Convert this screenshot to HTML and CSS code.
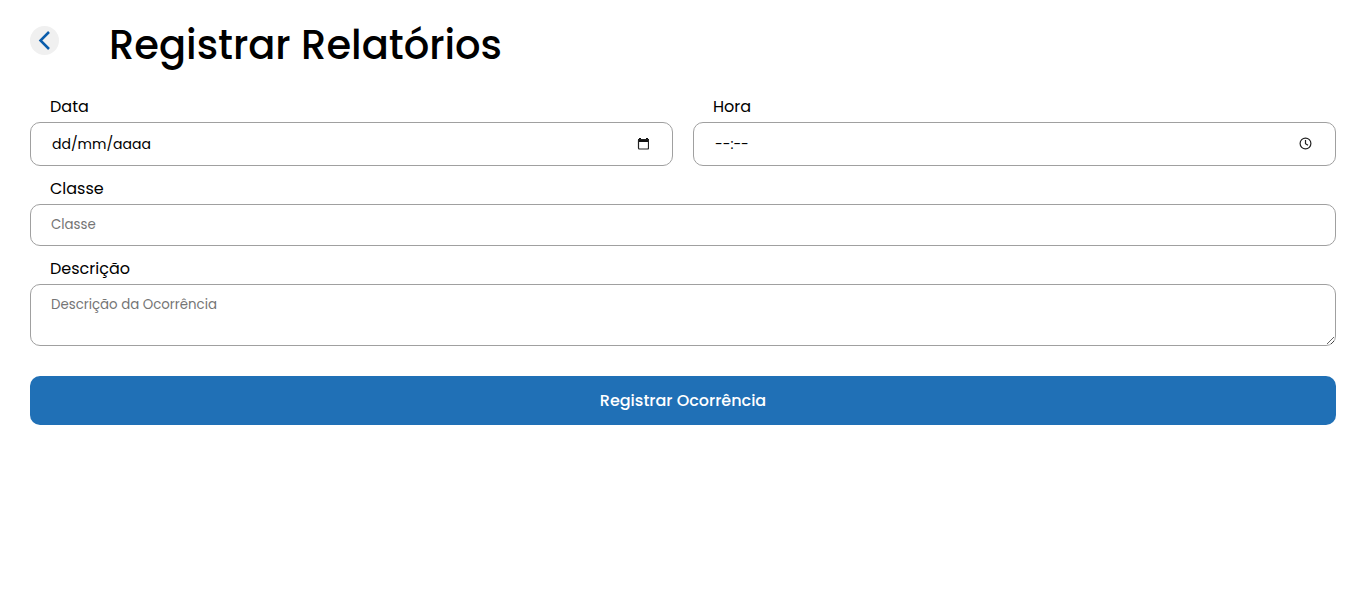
FILE: index.html
```
<!DOCTYPE html>
<html lang="pt-BR">
<head>
  <meta charset="utf-8">
  <meta name="viewport" content="width=device-width, initial-scale=1">
  <title>Registrar Relatórios</title>
  <link rel="stylesheet" href="styles.css">
</head>
<body>
  <main class="page">
    <header class="header">
      <a class="back" href="#" aria-label="Voltar">
        <svg class="back-icon" viewBox="0 0 29 29" aria-hidden="true"><path d="M19 6 10.500 14.500 19 23"/></svg>
      </a>
      <h1 class="title">Registrar Relatórios</h1>
    </header>
    <form class="form">
      <div class="row">
        <div class="field">
          <label class="label" for="data">Data</label>
          <div class="control picker">
            <input class="picker-input" id="data" type="text" placeholder="dd/mm/aaaa">
            <button class="picker-button" type="button" aria-label="Abrir calendário">
              <svg class="picker-icon" viewBox="0 0 13 13" aria-hidden="true"><path class="solid" d="M2 2h11v3H2zM3 1h2v2H3zM10 1h2v2h-2z"/><rect class="line" x="2.500" y="2.500" width="10" height="9.500" rx="1"/></svg>
            </button>
          </div>
        </div>
        <div class="field">
          <label class="label" for="hora">Hora</label>
          <div class="control picker">
            <input class="picker-input" id="hora" type="text" placeholder="--:--">
            <button class="picker-button" type="button" aria-label="Escolher horário">
              <svg class="picker-icon" viewBox="0 0 13 13" aria-hidden="true"><circle class="line" cx="6.500" cy="6.500" r="5.400"/><path class="line" d="M6.500 3v3.700L9 8.200"/></svg>
            </button>
          </div>
        </div>
      </div>
      <div class="field">
        <label class="label" for="classe">Classe</label>
        <input class="control text" id="classe" type="text" placeholder="Classe">
      </div>
      <div class="field">
        <label class="label" for="descricao">Descrição</label>
        <textarea class="control text area" id="descricao" placeholder="Descrição da Ocorrência"></textarea>
      </div>
      <button class="submit" type="submit">Registrar Ocorrência</button>
    </form>
  </main>
</body>
</html>
```
FILE: styles.css
```
* {
  box-sizing: border-box;
}

body {
  margin: 0;
  background: #fff;
  color: #000;
  font-family: Poppins, Inter, sans-serif;
  font-size: 16px;
  line-height: 24px;
}

.page {
  padding: 15px 30px 30px;
}

.header {
  display: flex;
  align-items: flex-start;
  gap: 50px;
  margin-bottom: 20px;
}

.back {
  flex: none;
  width: 29px;
  height: 29px;
  margin-top: 11px;
  border-radius: 50%;
  background: #f0f0f0;
}

.back-icon {
  display: block;
  fill: none;
  stroke: #0a5cab;
  stroke-width: 2.5;
}

.title {
  margin: 0;
  font-size: 40px;
  font-weight: 500;
  line-height: 60px;
}

.form {
  display: flex;
  flex-direction: column;
  gap: 11px;
}

.row {
  display: grid;
  grid-template-columns: 1fr 1fr;
  gap: 20px;
}

.field {
  display: flex;
  flex-direction: column;
  gap: 3px;
}

.label {
  padding-left: 20px;
}

.control {
  width: 100%;
  border: 1px solid #a0a0a0;
  border-radius: 10px;
  background: #fff;
  font-family: inherit;
  line-height: 20px;
}

.picker {
  display: flex;
  align-items: center;
  height: 44px;
  padding: 0 20px 1px 21px;
}

.picker-input {
  flex: 1;
  min-width: 0;
  padding: 0;
  border: 0;
  outline: 0;
  background: transparent;
  color: #000;
  font: inherit;
  font-size: 14px;
}

.picker-input::placeholder {
  color: #000;
  opacity: 1;
}

.picker-button {
  display: flex;
  padding: 3px;
  border: 0;
  background: transparent;
}

.picker-icon {
  width: 13px;
  height: 13px;
}

.solid {
  fill: #111;
}

.line {
  fill: none;
  stroke: #222;
  stroke-width: 1.2;
}

.text {
  height: 42px;
  padding: 10px 20px;
}

.text::placeholder {
  color: #757575;
}

.area {
  display: block;
  height: 62px;
  resize: vertical;
}

.submit {
  margin-top: 19px;
  padding: 13px 20px 12px;
  border: 0;
  border-radius: 10px;
  background: #2070b6;
  color: #fff;
  font-family: inherit;
  font-size: 16px;
  font-weight: 500;
  line-height: 24px;
}
```
